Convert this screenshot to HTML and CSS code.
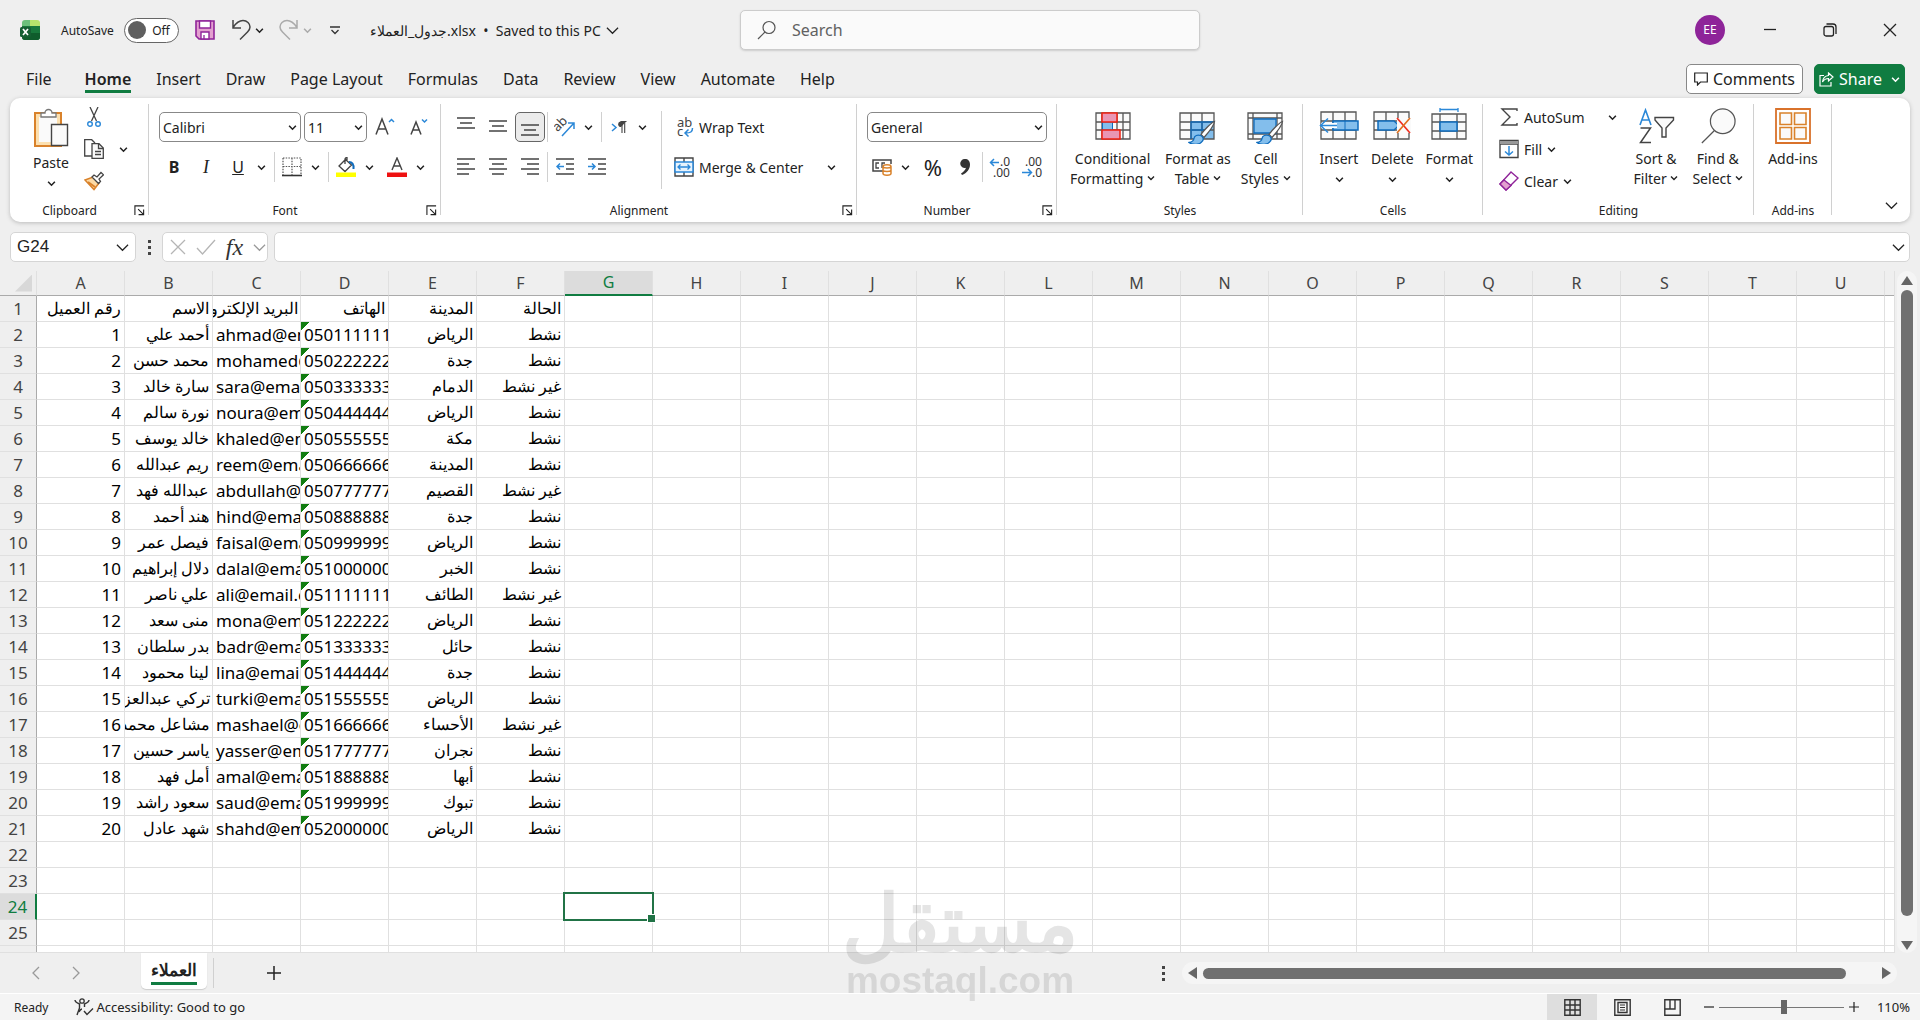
FILE: index.html
```html
<!DOCTYPE html>
<html lang="en">
<head>
<meta charset="UTF-8">
  <meta name="viewport" content="width=device-width, initial-scale=1.0">
  <title>جدول_العملاء.xlsx - Excel</title>
  <link rel="stylesheet" href="styles.css">
</head>
<body>

  <!-- shared icons -->
  <svg class="defs" width="0" height="0" aria-hidden="true">
    <symbol id="chev" viewBox="0 0 8 8"><path d="M1 2.5l3 3 3-3" fill="none" stroke="currentColor" stroke-width="1.4"/></symbol>
    <symbol id="chev-big" viewBox="0 0 14 14"><path d="M1 4l6 6 6-6" fill="none" stroke="currentColor" stroke-width="1.3"/></symbol>
    <symbol id="launch" viewBox="0 0 12 12"><path d="M1 11V1h10M4.500 4.500L10 10M10.500 5v5.500H5" fill="none" stroke="currentColor" stroke-width="1.2"/></symbol>
    <symbol id="brush" viewBox="0 0 28 26"><path d="M26.500 1.500c-3 1-10 8-13.500 13l3 3C20 13 26 6 26.500 1.500z" fill="#fff" stroke="#555" stroke-width="1.3"/><path d="M12.500 15.500c-3-1-6 0-6.500 3-.4 2.500-2 3.500-5 4 4 3 11 2.500 13.500-1.500 1.500-2 .5-4.500-2-5.500z" fill="#83beec" stroke="#0f6cbd" stroke-width="1.3"/></symbol>
  </svg>

  <header class="titlebar">
    <div class="title-left">
      <svg class="logo" width="20" height="20" viewBox="0 0 20 20"><path d="M5 0h6v7H2V3a3 3 0 0 1 3-3z" fill="#6cc07c"/><path d="M10 0h7a3 3 0 0 1 3 3v4H10z" fill="#b6e36c"/><path d="M2 6h18v11a3 3 0 0 1-3 3H5a3 3 0 0 1-3-3z" fill="#18783c"/><path d="M2 13h18v4a3 3 0 0 1-3 3H5a3 3 0 0 1-3-3z" fill="#0f5c2c"/><rect y="7" width="11" height="10" rx="1.500" fill="#155f33"/><path d="M3 9l5 6M8 9l-5 6" stroke="#fff" stroke-width="1.700"/></svg>
      <label class="autosave">AutoSave
        <span class="toggle"><input type="checkbox"><i></i>Off</span>
      </label>
      <button class="save" title="Save"><svg width="20" height="20" viewBox="0 0 20 20"><path d="M1 1h18v18H4l-3-3z" fill="#e3a0cf" stroke="#8f2399" stroke-width="1.600"/><path d="M4.500 1h11v7h-11zM6 12h8v7H6z" fill="#fff" stroke="#8f2399" stroke-width="1.400"/><path d="M9 19v-4" stroke="#8f2399" stroke-width="1.300"/></svg></button>
      <button class="undo" title="Undo"><svg width="20" height="22" viewBox="0 0 20 22"><path d="M2 1v8h8M2 8.500C5 4 8 1.500 12 1.500c4 0 7 3 7 6.500 0 2-1 3.500-2.500 5L9 20.500" fill="none" stroke="#444" stroke-width="1.500"/></svg></button>
      <button class="mini" title="Undo list"><svg width="9" height="9"><use href="#chev"/></svg></button>
      <button class="redo" title="Redo"><svg width="20" height="22" viewBox="0 0 20 22"><path d="M18 1v8h-8M18 8.500C15 4 12 1.500 8 1.500c-4 0-7 3-7 6.500 0 2 1 3.500 2.500 5l7.500 7.500" fill="none" stroke="#aaa" stroke-width="1.500"/></svg></button>
      <button class="mini dim" title="Redo list"><svg width="9" height="9"><use href="#chev"/></svg></button>
      <button class="qat" title="Customize"><svg width="10" height="9" viewBox="0 0 10 9"><path d="M0 1h10M1.500 4L5 7.500 8.500 4" fill="none" stroke="#333" stroke-width="1.300"/></svg></button>
      <button class="filename">جدول_العملاء.xlsx&nbsp; • &nbsp;Saved to this PC <svg width="13" height="13"><use href="#chev-big"/></svg></button>
    </div>
    <label class="search">
      <svg width="20" height="20" viewBox="0 0 20 20"><circle cx="12" cy="7.500" r="6" fill="none" stroke="#555" stroke-width="1.200"/><path d="M8 12l-7 7" stroke="#555" stroke-width="1.200"/></svg>
      <input type="text" placeholder="Search">
    </label>
    <div class="title-right">
      <button class="win"><span class="avatar">EE</span></button>
      <button class="win" title="Minimize"><svg width="14" height="14" viewBox="0 0 14 14"><path d="M1 6.500h12" stroke="#222" stroke-width="1.300"/></svg></button>
      <button class="win" title="Restore"><svg width="14" height="14" viewBox="0 0 14 14"><rect x="1" y="3.500" width="9.500" height="9.500" rx="2" fill="none" stroke="#222" stroke-width="1.300"/><path d="M3.500 1h6.500a3 3 0 0 1 3 3v7" fill="none" stroke="#222" stroke-width="1.300"/></svg></button>
      <button class="win" title="Close"><svg width="14" height="14" viewBox="0 0 14 14"><path d="M1 1l12 12M13 1L1 13" stroke="#222" stroke-width="1.300"/></svg></button>
    </div>
  </header>

  <nav class="tabs">
    <button class="tab file">File</button>
    <button class="tab active">Home</button>
    <button class="tab">Insert</button>
    <button class="tab">Draw</button>
    <button class="tab">Page Layout</button>
    <button class="tab">Formulas</button>
    <button class="tab">Data</button>
    <button class="tab">Review</button>
    <button class="tab">View</button>
    <button class="tab">Automate</button>
    <button class="tab">Help</button>
    <div class="spacer"></div>
    <button class="comments"><svg width="14" height="14" viewBox="0 0 14 14"><path d="M.7 1h12.600v9H6.500L3.500 13v-3H.7z" fill="none" stroke="#222" stroke-width="1.200"/></svg>Comments</button>
    <button class="share"><svg width="15" height="15" viewBox="0 0 15 15"><path d="M5 3.500H1v10.500h11v-4M9.500 1l4.500 4-4.500 4V6.500C7 6.500 5 7.500 3.500 10 4 6 6.500 3.800 9.500 3.500z" fill="none" stroke="#fff" stroke-width="1.200"/></svg>Share<svg class="tail" width="9" height="9"><use href="#chev"/></svg></button>
  </nav>

  <section class="ribbon">
    <div class="group clipboard">
      <div class="body">
        <button class="big paste"><svg width="36" height="40" viewBox="0 0 36 40"><path d="M2 5h26v33H2z" fill="#fce0b0" stroke="#d9822b" stroke-width="2"/><path d="M6 9h18v25H6z" fill="#fafafa"/><path d="M8 9V5h4a3.500 3.500 0 0 1 7 0h4v4z" fill="#fff" stroke="#777" stroke-width="1.300"/><path d="M18.500 16.500h16v21h-16z" fill="#fafafa" stroke="#444" stroke-width="1.400"/></svg><span>Paste</span><svg width="9" height="9"><use href="#chev"/></svg></button>
        <div class="col3">
          <button class="ic" title="Cut"><svg width="14" height="20" viewBox="0 0 14 20"><path d="M3 0l6.500 14M11 0L4.500 14" stroke="#444" stroke-width="1.300"/><circle cx="3" cy="17" r="2.300" fill="none" stroke="#2b88d8" stroke-width="1.400"/><circle cx="11" cy="17" r="2.300" fill="none" stroke="#2b88d8" stroke-width="1.400"/></svg></button>
          <div class="line"><button class="ic" title="Copy"><svg width="20" height="20" viewBox="0 0 20 20"><path d="M8 17H.7V.7h7L11 4" fill="none" stroke="#444" stroke-width="1.300"/><path d="M8 4.700h7L19.300 9v10.300H8z" fill="#fafafa" stroke="#444" stroke-width="1.300"/><path d="M14.500 5v4.500H19M11 12.500h6M11 15.500h6" fill="none" stroke="#444" stroke-width="1.300"/></svg></button><button class="mini copies" title="Copy options"><svg width="9" height="9"><use href="#chev"/></svg></button></div>
          <button class="ic" title="Format Painter"><svg width="20" height="20" viewBox="0 0 20 20"><path d="M1 9l8-3 6 6-5 6.500z" fill="#fcd9a4" stroke="#d9822b" stroke-width="1.500"/><path d="M4 11l7 5" stroke="#d9822b" stroke-width="2"/><path d="M8 6l2-2 3 2 4-4.500 2.500 2.300L15 8l1.500 2.500-2 2z" fill="#fff" stroke="#444" stroke-width="1.300"/></svg></button>
        </div>
      </div>
      <div class="caption more"><span>Clipboard</span><button title="Clipboard settings"><svg width="11" height="11"><use href="#launch"/></svg></button></div>
    </div>

    <div class="group font">
      <div class="body rows">
        <div class="line first">
          <span class="pick family"><select aria-label="Font"><option>Calibri</option></select><svg width="9" height="9"><use href="#chev"/></svg></span>
          <span class="pick size"><select aria-label="Font size"><option>11</option></select><svg width="9" height="9"><use href="#chev"/></svg></span>
          <button class="ic" title="Increase Font Size"><svg width="20" height="20" viewBox="0 0 20 20"><path d="M1 17.500L7 2l6 15.500M3 12h8" fill="none" stroke="#444" stroke-width="1.500"/><path d="M14 5l2.500-2.500L19 5" fill="none" stroke="#2b88d8" stroke-width="1.500"/></svg></button>
          <button class="ic" title="Decrease Font Size"><svg width="20" height="20" viewBox="0 0 20 20"><path d="M3 17.500L8 5l5 12.500M5 13h6" fill="none" stroke="#444" stroke-width="1.500"/><path d="M14 2.500L16.500 5 19 2.500" fill="none" stroke="#2b88d8" stroke-width="1.500"/></svg></button>
        </div>
        <div class="line">
          <button class="ic b">B</button>
          <button class="ic i">I</button>
          <button class="ic u">U</button>
          <button class="mini" title="Underline style"><svg width="9" height="9"><use href="#chev"/></svg></button>
          <span class="sep"></span>
          <button class="ic" title="Borders"><svg width="20" height="20" viewBox="0 0 20 20"><path d="M1 1h18v17M1 1v17M10 1v17M1 9.500h18" fill="none" stroke="#555" stroke-width="1.200" stroke-dasharray="1.500 1.200"/><path d="M0 18.500h20" stroke="#333" stroke-width="1.600"/></svg></button>
          <button class="mini" title="Border styles"><svg width="9" height="9"><use href="#chev"/></svg></button>
          <span class="sep"></span>
          <button class="ic" title="Fill Color"><svg width="20" height="20" viewBox="0 0 20 20"><path d="M3 9l6.500-6.500 6 5.500-6.500 6.500zM9 7V2a2 2 0 0 1 2-1.500V4" fill="none" stroke="#444" stroke-width="1.300"/><path d="M13 5c3 0 5 2 4.500 7" fill="none" stroke="#0f6cbd" stroke-width="2"/><path d="M0 15.500h20V20H0z" fill="#ff0"/></svg></button>
          <button class="mini" title="Fill colors"><svg width="9" height="9"><use href="#chev"/></svg></button>
          <button class="ic color" title="Font Color"><svg width="20" height="20" viewBox="0 0 20 20"><path d="M5 13L10 1l5 12M6.500 9h7" fill="none" stroke="#444" stroke-width="1.400"/><path d="M0 15.500h20V20H0z" fill="#e11"/></svg></button>
          <button class="mini" title="Font colors"><svg width="9" height="9"><use href="#chev"/></svg></button>
        </div>
      </div>
      <div class="caption more"><span>Font</span><button title="Font settings"><svg width="11" height="11"><use href="#launch"/></svg></button></div>
    </div>

    <div class="group alignment">
      <div class="body">
        <div class="rows">
          <div class="line">
            <button class="ic" title="Top Align"><svg width="18" height="20" viewBox="0 0 18 20"><path d="M0 1h18M3 6h12M0 11h18" stroke="#444" stroke-width="1.400"/></svg></button>
            <button class="ic" title="Middle Align"><svg width="18" height="20" viewBox="0 0 18 20"><path d="M0 4h18M3 9h12M0 14h18" stroke="#444" stroke-width="1.400"/></svg></button>
            <button class="ic on" title="Bottom Align"><svg width="18" height="20" viewBox="0 0 18 20"><path d="M0 8h18M3 13h12M0 18h18" stroke="#444" stroke-width="1.400"/></svg></button>
            <span class="sep tight"></span>
            <button class="ic" title="Orientation"><svg width="22" height="22" viewBox="0 0 22 22"><text x="0" y="12" transform="rotate(-45 7 10)" font-size="13" fill="#444">ab</text><path d="M8 20L20 7M14 7h6v6" fill="none" stroke="#2b88d8" stroke-width="1.500"/></svg></button>
            <button class="mini" title="Orientation options"><svg width="9" height="9"><use href="#chev"/></svg></button>
            <span class="sep"></span>
            <button class="ic" title="Text direction"><svg width="16" height="14" viewBox="0 0 16 14"><path d="M1 4l4 3.500L1 11" fill="none" stroke="#2b88d8" stroke-width="1.500"/><path d="M15 1.500h-5a2.800 2.800 0 0 0 0 5.600z" fill="#444"/><path d="M15.500 1.500H9.500M11 2v11M13.700 2v11" stroke="#444" stroke-width="1.100"/></svg></button>
            <button class="mini" title="Direction options"><svg width="9" height="9"><use href="#chev"/></svg></button>
          </div>
          <div class="line">
            <button class="ic" title="Align Left"><svg width="18" height="18" viewBox="0 0 18 18"><path d="M0 1h18M0 6h12M0 11h18M0 16h12" stroke="#444" stroke-width="1.400"/></svg></button>
            <button class="ic" title="Center"><svg width="18" height="18" viewBox="0 0 18 18"><path d="M0 1h18M3 6h12M0 11h18M3 16h12" stroke="#444" stroke-width="1.400"/></svg></button>
            <button class="ic" title="Align Right"><svg width="18" height="18" viewBox="0 0 18 18"><path d="M0 1h18M6 6h12M0 11h18M6 16h12" stroke="#444" stroke-width="1.400"/></svg></button>
            <span class="sep tight"></span>
            <button class="ic" title="Decrease Indent"><svg width="18" height="18" viewBox="0 0 18 18"><path d="M0 1h18M10 6h8M10 11h8M0 16h18" stroke="#444" stroke-width="1.400"/><path d="M8 8.500H1M4 5.500l-3 3 3 3" fill="none" stroke="#2b88d8" stroke-width="1.500"/></svg></button>
            <button class="ic" title="Increase Indent"><svg width="18" height="18" viewBox="0 0 18 18"><path d="M0 1h18M10 6h8M10 11h8M0 16h18" stroke="#444" stroke-width="1.400"/><path d="M0 8.500h7M4 5.500l3 3-3 3" fill="none" stroke="#2b88d8" stroke-width="1.500"/></svg></button>
          </div>
        </div>
        <span class="sep tall"></span>
        <div class="rows">
          <button class="wide"><svg width="20" height="20" viewBox="0 0 20 20"><text x="3" y="10" font-size="13" fill="#444">ab</text><text x="3" y="19" font-size="13" fill="#444">c</text><path d="M18.500 11c0 4-2 5-7 5M14.500 12.500L11 16l3.500 3.500" fill="none" stroke="#2b88d8" stroke-width="1.500"/></svg>Wrap Text</button>
          <div class="line"><button class="wide"><svg width="20" height="20" viewBox="0 0 20 20"><path d="M1 1h18v18H1zM10 1v4M10 15v4" fill="none" stroke="#444" stroke-width="1.400"/><path d="M1 5h18v10H1z" fill="#e8f3fc" stroke="#2b88d8" stroke-width="1.500"/><path d="M4 10h12M6.500 7.500L4 10l2.500 2.500M13.500 7.500L16 10l-2.500 2.500" fill="none" stroke="#2b88d8" stroke-width="1.300"/></svg>Merge &amp; Center</button><button class="mini merge" title="Merge options"><svg width="9" height="9"><use href="#chev"/></svg></button></div>
        </div>
      </div>
      <div class="caption more"><span>Alignment</span><button title="Alignment settings"><svg width="11" height="11"><use href="#launch"/></svg></button></div>
    </div>

    <div class="group number">
      <div class="body rows">
        <span class="pick format"><select aria-label="Number format"><option>General</option></select><svg width="9" height="9"><use href="#chev"/></svg></span>
        <div class="line">
          <button class="ic" title="Accounting"><svg width="20" height="18" viewBox="0 0 20 18"><path d="M11 13H1V2h18v4" fill="none" stroke="#444" stroke-width="1.500"/><path d="M7 5H4v5h3M13 5h-3v5" fill="none" stroke="#444" stroke-width="1.300"/><path d="M11 8.500v7c0 2.300 8 2.300 8 0v-7c0-2.300-8-2.300-8 0zm0 0c0 2 8 2 8 0m-8 3.500c0 2 8 2 8 0" fill="#fff" stroke="#d9822b" stroke-width="1.500"/></svg></button>
          <button class="mini" title="Currencies"><svg width="9" height="9"><use href="#chev"/></svg></button>
          <button class="ic percent">%</button>
          <button class="ic" title="Comma Style"><svg width="12" height="18" viewBox="0 0 12 18"><path d="M6 1a4.500 4.500 0 1 0 1 8.800C6.500 12 4.500 14 2 15.500l1 1.500C8 15 11 11 11 6.500 11 3 9 1 6 1z" fill="#333"/></svg></button>
          <span class="sep tight"></span>
          <button class="ic" title="Increase Decimal"><svg width="22" height="22" viewBox="0 0 22 22"><text x="11" y="10" font-size="12" fill="#333">.0</text><text x="4" y="21" font-size="12" fill="#333">.00</text><path d="M10 6.500H2M5 3L1.500 6.500 5 10" fill="none" stroke="#2b88d8" stroke-width="1.500"/></svg></button>
          <button class="ic" title="Decrease Decimal"><svg width="22" height="22" viewBox="0 0 22 22"><text x="4" y="10" font-size="12" fill="#333">.00</text><text x="11" y="21" font-size="12" fill="#333">.0</text><path d="M1 16.500h9M7 13l3.500 3.500L7 20" fill="none" stroke="#2b88d8" stroke-width="1.500"/></svg></button>
        </div>
      </div>
      <div class="caption more"><span>Number</span><button title="Number settings"><svg width="11" height="11"><use href="#launch"/></svg></button></div>
    </div>

    <div class="group styles">
      <div class="body">
        <button class="big"><svg width="36" height="36" viewBox="0 0 36 36"><path d="M1 5h34v26H1zM1 14h34M1 22h34M7 5v26M22 5v26M28 5v26" fill="#fafafa" stroke="#555" stroke-width="1.300"/><path d="M7.500 14h10v8h-10z" fill="#83beec" stroke="#0f6cbd"/><path d="M7 5h15v9H7zM7 22h18v9H7z" fill="#e996b4" stroke="#f02010" stroke-width="1.500"/></svg><span>Conditional</span><span>Formatting <svg width="8" height="8"><use href="#chev"/></svg></span></button>
        <button class="big"><svg width="38" height="36" viewBox="0 0 38 36"><path d="M1 5h34v26H1z" fill="#fafafa"/><path d="M12 14h23v17H12z" fill="#83beec"/><path d="M1 5h34v26H1zM1 14h34M1 22h34M12 5v26M23 5v26" fill="none" stroke="#555" stroke-width="1.300"/><path d="M12 31V14h23M12 22h20M23 14v9" fill="none" stroke="#0f6cbd" stroke-width="1.300"/><use href="#brush" x="9" y="12" width="28" height="26"/></svg><span>Format as</span><span>Table <svg width="8" height="8"><use href="#chev"/></svg></span></button>
        <button class="big"><svg width="38" height="36" viewBox="0 0 38 36"><path d="M1 5h34v26H1zM1 10h34M1 26h34M6 5v26M30 5v26" fill="#fafafa" stroke="#555" stroke-width="1.300"/><path d="M7 11h22v14H7z" fill="#83beec" stroke="#0f6cbd" stroke-width="1.300"/><use href="#brush" x="9" y="12" width="28" height="26"/></svg><span>Cell</span><span>Styles <svg width="8" height="8"><use href="#chev"/></svg></span></button>
      </div>
      <div class="caption"><span>Styles</span></div>
    </div>

    <div class="group cells">
      <div class="body">
        <button class="big"><svg width="40" height="36" viewBox="0 0 40 36"><path d="M2 4h35v27H2zM2 13h35M2 22h35M14 4v27M26 4v27" fill="#fafafa" stroke="#555" stroke-width="1.300"/><path d="M14 13h25v9H14z" fill="#83beec" stroke="#0f6cbd" stroke-width="1.500"/><path d="M26 13v9" stroke="#0f6cbd"/><path d="M18 17.500H2" stroke="#fff" stroke-width="5"/><path d="M18 17.500H2M9 10.500l-7.500 7 7.500 7" fill="none" stroke="#2b88d8" stroke-width="1.500"/></svg><span>Insert</span><svg width="9" height="9"><use href="#chev"/></svg></button>
        <button class="big"><svg width="38" height="36" viewBox="0 0 38 36"><path d="M1 4h35v27H1zM1 13h35M1 22h35M13 4v27M25 4v27" fill="#fafafa" stroke="#555" stroke-width="1.300"/><path d="M5 13h16l5 4.500-5 4.500H5z" fill="#83beec" stroke="#0f6cbd" stroke-width="1.500"/><path d="M24 10h14v15H24z" fill="#fafafa"/><path d="M24 10l13 15" stroke="#f03020" stroke-width="1.700"/><path d="M37 10L24 25" stroke="#e07020" stroke-width="1.700"/></svg><span>Delete</span><svg width="9" height="9"><use href="#chev"/></svg></button>
        <button class="big"><svg width="38" height="36" viewBox="0 0 38 36"><path d="M2 6h34v25H2zM2 14h34M2 23h34M10 6v25M27 6v25" fill="#fafafa" stroke="#555" stroke-width="1.300"/><path d="M10 14h17v9H10z" fill="#83beec" stroke="#0f6cbd" stroke-width="1.500"/><path d="M10 1.500h18M10 0v4M28 0v4" stroke="#2b88d8" stroke-width="1.300"/></svg><span>Format</span><svg width="9" height="9"><use href="#chev"/></svg></button>
      </div>
      <div class="caption"><span>Cells</span></div>
    </div>

    <div class="group editing">
      <div class="body">
        <div class="col3">
          <div class="line"><button class="wide"><svg width="20" height="20" viewBox="0 0 20 20"><path d="M18 4V2H3l8 8-8 8h15v-2" fill="none" stroke="#444" stroke-width="1.400"/></svg>AutoSum</button><button class="mini sum" title="Functions"><svg width="9" height="9"><use href="#chev"/></svg></button></div>
          <button class="wide"><svg width="20" height="20" viewBox="0 0 20 20"><path d="M1 1.500h18v17H1zM1 5h18" fill="none" stroke="#444" stroke-width="1.400"/><path d="M1 2h18v3H1z" fill="#999"/><path d="M10 7v9M6 12.500l4 3.500 4-3.500" fill="none" stroke="#2b88d8" stroke-width="1.500"/></svg>Fill <svg width="9" height="9"><use href="#chev"/></svg></button>
          <button class="wide"><svg width="20" height="20" viewBox="0 0 20 20"><path d="M12 1l7 6-12 12-6-6z" fill="#fff" stroke="#8f2399" stroke-width="1.400"/><path d="M5 9l7 5.500L7 19l-6-6z" fill="#e3a0cf" stroke="#8f2399" stroke-width="1.400"/></svg>Clear <svg width="9" height="9"><use href="#chev"/></svg></button>
        </div>
        <button class="big"><svg width="38" height="36" viewBox="0 0 38 36"><path d="M3 17L8.500 2 14 17M5 12h7" fill="none" stroke="#2b88d8" stroke-width="1.600"/><path d="M3.500 20h10L3.500 34.500h10.500" fill="none" stroke="#444" stroke-width="1.500"/><path d="M18 9.500h18.500v2.500l-7.500 8v9h-4v-9l-7-8z" fill="#fafafa" stroke="#444" stroke-width="1.400"/></svg><span>Sort &amp;</span><span>Filter <svg width="8" height="8"><use href="#chev"/></svg></span></button>
        <button class="big"><svg width="38" height="38" viewBox="0 0 38 38"><circle cx="24" cy="14" r="13" fill="#fafafa" stroke="#555" stroke-width="1.300"/><path d="M15 24L2 37" stroke="#555" stroke-width="1.300"/></svg><span>Find &amp;</span><span>Select <svg width="8" height="8"><use href="#chev"/></svg></span></button>
      </div>
      <div class="caption"><span>Editing</span></div>
    </div>

    <div class="group addins">
      <div class="body">
        <button class="big"><svg width="36" height="36" viewBox="0 0 36 36"><path d="M1 1h34v34H1z" fill="#fff" stroke="#d9722b" stroke-width="1.800"/><path d="M5 5h11.500v11.500H5zM19.500 5H31v11.500H19.500zM5 19.500h11.500V31H5zM19.500 19.500H31V31H19.500z" fill="#fafafa" stroke="#d9822b" stroke-width="1.600"/></svg><span>Add-ins</span></button>
      </div>
      <div class="caption"><span>Add-ins</span></div>
    </div>
    <button class="collapse" title="Collapse ribbon"><svg width="13" height="13"><use href="#chev-big"/></svg></button>
  </section>

  <section class="formula">
    <div class="box namebox"><input type="text" aria-label="Name Box" value="G24"><svg width="13" height="13"><use href="#chev-big"/></svg></div>
    <span class="dots"></span>
    <div class="box fxbox">
      <button title="Cancel"><svg width="16" height="16" viewBox="0 0 16 16"><path d="M1 1l14 14M15 1L1 15" stroke="#b5b5b5" stroke-width="1.300"/></svg></button>
      <button title="Enter"><svg width="20" height="16" viewBox="0 0 20 16"><path d="M1 9l5.500 6L19 1" fill="none" stroke="#b5b5b5" stroke-width="1.300"/></svg></button>
      <button class="fx">fx</button>
      <svg width="13" height="13"><use href="#chev-big"/></svg>
    </div>
    <div class="box inputbox"><input type="text" aria-label="Formula Bar"><svg width="13" height="13"><use href="#chev-big"/></svg></div>
  </section>

  <main class="sheet">
    <div class="grid-wrap">
      <table id="grid"></table>
    </div>
    <div class="vscroll"><i class="up"></i><i class="thumb"></i><i class="down"></i></div>
  </main>

  <footer class="sheetbar">
    <button class="nav" title="Previous sheet"><svg width="8" height="14" viewBox="0 0 8 14"><path d="M7 1L1 7l6 6" fill="none" stroke="#999" stroke-width="1.300"/></svg></button>
    <button class="nav" title="Next sheet"><svg width="8" height="14" viewBox="0 0 8 14"><path d="M1 1l6 6-6 6" fill="none" stroke="#999" stroke-width="1.300"/></svg></button>
    <button class="sheet-tab"><span>العملاء</span></button>
    <span class="sep"></span>
    <button class="plus" title="New sheet"><svg width="14" height="14" viewBox="0 0 14 14"><path d="M7 0v14M0 7h14" stroke="#222" stroke-width="1.500"/></svg></button>
    <div class="spacer"></div>
    <span class="dots"></span>
    <div class="hscroll"><i class="left"></i><i class="thumb"></i><i class="right"></i></div>
  </footer>

  <div class="status">
    <span class="ready">Ready</span>
    <button class="access"><svg width="20" height="18" viewBox="0 0 20 18"><circle cx="8" cy="3" r="2.200" fill="none" stroke="#333" stroke-width="1.300"/><path d="M1 2c0 2 2 3 4.500 4v4L3 17M15 2c0 2-2 3-4.500 4v3M5 14c1-2 2-3 3-3" fill="none" stroke="#333" stroke-width="1.400"/><path d="M10 13l3 3.500 6-6" fill="none" stroke="#333" stroke-width="1.400"/></svg>Accessibility: Good to go</button>
    <div class="spacer"></div>
    <button class="view on" title="Normal"><svg width="17" height="17" viewBox="0 0 17 17"><path d="M.8.8h15.400v15.400H.8zM.8 6h15.400M.8 11h15.400M6 .8v15.400M11 .8v15.400" fill="none" stroke="#333" stroke-width="1.400"/></svg></button>
    <button class="view" title="Page Layout"><svg width="17" height="17" viewBox="0 0 17 17"><path d="M.8.8h15.400v15.400H.8zM4 3.500h9v10H4z" fill="none" stroke="#333" stroke-width="1.400"/><path d="M6 6h5M6 8.500h5M6 11h5" stroke="#333"/></svg></button>
    <button class="view" title="Page Break Preview"><svg width="17" height="17" viewBox="0 0 17 17"><path d="M.8.8h15.400v15.400H.8zM.8 10H11V.8M6 .8V10" fill="none" stroke="#333" stroke-width="1.400"/></svg></button>
    <button class="zoom-btn" title="Zoom Out"><svg width="10" height="10" viewBox="0 0 10 10"><path d="M0 5h10" stroke="#222" stroke-width="1.200"/></svg></button>
    <input type="range" aria-label="Zoom" min="0" max="200" value="104">
    <button class="zoom-btn" title="Zoom In"><svg width="10" height="10" viewBox="0 0 10 10"><path d="M0 5h10M5 0v10" stroke="#222" stroke-width="1.200"/></svg></button>
    <span class="percent">110%</span>
  </div>

  <div class="watermark"><b lang="ar">مستقل</b><span>mostaql.com</span></div>

  <script src="script.js"></script>
</body>
</html>
```
FILE: styles.css
```css
* {
  box-sizing: border-box;
}
body {
  margin: 0;
  height: 100vh;
  display: flex;
  flex-direction: column;
  overflow: hidden;
  background: #efefef;
  color: #222;
  font-family: "Noto Sans", "Open Sans", sans-serif;
  font-size: 14px;
}
button, input, select {
  font: inherit;
  color: inherit;
  background: none;
  border: 0;
  padding: 0;
  margin: 0;
  outline: 0;
}
button {
  display: flex;
  align-items: center;
  justify-content: center;
  white-space: nowrap;
}
svg {
  display: block;
  flex: none;
}
.defs {
  position: absolute;
}
.spacer {
  flex: 1;
}

/* title bar */
.titlebar {
  height: 60px;
  flex: none;
  display: grid;
  grid-template-columns: 1fr 460px 1fr;
  align-items: center;
  padding-left: 20px;
}
.title-left {
  display: flex;
  align-items: center;
}
.autosave {
  display: flex;
  align-items: center;
  gap: 10px;
  margin-left: 21px;
  font-size: 12px;
}
.toggle {
  width: 55px;
  height: 25px;
  padding: 0 8px 0 3px;
  display: flex;
  align-items: center;
  justify-content: space-between;
  border: 1px solid #666;
  border-radius: 13px;
  background: #fff;
}
.toggle input {
  position: absolute;
  opacity: 0;
}
.toggle i {
  width: 18px;
  height: 18px;
  border-radius: 50%;
  background: #5f5f5f;
}
.save {
  margin: 0 14px 0 16px;
}
.mini {
  width: 14px;
  height: 30px;
}
.undo, .redo {
  width: 24px;
}
.titlebar .mini {
  margin-right: 10px;
}
.dim {
  color: #aaa;
}
.qat {
  margin: 0 30px 0 5px;
}
.filename svg {
  margin-left: 5px;
}
.search {
  height: 40px;
  display: flex;
  align-items: center;
  gap: 15px;
  padding: 0 16px;
  border: 1px solid #ccc;
  border-radius: 5px;
  background: #fafafa;
  box-shadow: 0 1px 2px #ccc;
  font-size: 16px;
}
.search input {
  flex: 1;
}
.search input::placeholder {
  color: #616161;
}
.title-right {
  display: flex;
  justify-content: flex-end;
}
.win {
  width: 60px;
  height: 60px;
}
.avatar {
  width: 30px;
  height: 30px;
  line-height: 30px;
  border-radius: 50%;
  background: #8e2499;
  color: #fff;
  font-size: 12px;
}

/* ribbon tabs */
.tabs {
  height: 38px;
  flex: none;
  display: flex;
  align-items: center;
  gap: 25px;
  padding: 0 15px 0 26px;
  font-size: 16px;
}
.tab {
  height: 28px;
  border-bottom: 3px solid transparent;
  border-top: 3px solid transparent;
}
.tab.file {
  margin-right: 8px;
}
.tab.active {
  font-weight: 600;
  border-bottom-color: #107c41;
}
.comments, .share {
  height: 30px;
  gap: 5px;
  padding: 0 7px;
  border: 1px solid #888;
  border-radius: 5px;
  background: #fff;
}
.share {
  margin-left: -14px;
  padding: 0 4px;
  background: #107c41;
  border-color: #107c41;
  color: #fff;
}
.tail {
  margin-left: 4px;
}

/* ribbon */
.ribbon {
  height: 124px;
  flex: none;
  display: flex;
  margin: 0 10px;
  border-radius: 10px;
  background: #fff;
  box-shadow: 0 1px 4px #bbb;
  white-space: nowrap;
}
.group {
  position: relative;
  display: flex;
  flex-direction: column;
  padding: 4px 9px 2px;
  flex: none;
}
.group::after {
  content: "";
  position: absolute;
  right: 0;
  top: 6px;
  bottom: 7px;
  width: 1px;
  background: #d0d0d0;
}
.clipboard { width: 139px; }
.font { width: 292px; }
.alignment { width: 416px; }
.number { width: 200px; }
.styles { width: 246px; }
.cells { width: 180px; }
.editing { width: 271px; }
.addins { width: 78px; }
.body {
  flex: 1;
  display: flex;
}
.rows {
  display: flex;
  flex-direction: column;
  align-items: flex-start;
  gap: 10px;
  padding-top: 10px;
}
.line {
  display: flex;
  align-items: center;
}
.first {
  gap: 3px;
}
.first .ic {
  width: 30px;
}
.col3 {
  display: flex;
  flex-direction: column;
  align-items: flex-start;
  gap: 2px;
}
.caption {
  height: 20px;
  display: flex;
  align-items: center;
  justify-content: center;
  font-size: 12px;
}
.caption.more {
  padding-right: 20px;
}
.caption button {
  position: absolute;
  right: 4px;
}
.ic {
  width: 32px;
  height: 30px;
}
.ic.on {
  width: 30px;
  margin: 0 1px;
  border: 1px solid #666;
  border-radius: 5px;
  background: #ebebeb;
}
.b {
  font-weight: 700;
  font-size: 16px;
}
.i {
  font-style: italic;
  font-size: 18px;
  font-family: "Liberation Serif", serif;
}
.u {
  font-size: 16px;
  text-decoration: underline;
}
.color {
  margin-left: 5px;
}
.percent.ic {
  margin-left: 5px;
  font-size: 22px;
}
.sep {
  width: 1px;
  height: 30px;
  margin: 0 1px 0 6px;
  background: #d0d0d0;
}
.sep.tight {
  margin: 0 1px;
}
.sep.tall {
  height: 78px;
  margin: 9px 12px 0;
}
.pick {
  position: relative;
  height: 30px;
  border: 1px solid #888;
  border-radius: 5px;
}
.pick select {
  width: 100%;
  height: 100%;
  padding-left: 3px;
  appearance: none;
}
.pick svg {
  position: absolute;
  right: 3px;
  top: 10px;
}
.family { width: 142px; }
.size { width: 63px; }
.format { width: 180px; }
.family, .format {
  margin-left: 1px;
}
.wide {
  height: 30px;
  gap: 5px;
}
.merge {
  margin-left: 21px;
}
.sum {
  margin-left: 21px;
}
.big {
  height: 98px;
  flex-direction: column;
  justify-content: flex-start;
  padding-top: 6px;
}
.big > svg:first-child {
  height: 36px;
  margin-bottom: 5px;
}
.big > span {
  line-height: 20px;
}
.big > svg:last-child {
  margin-top: 6px;
}
.big span svg {
  display: inline-block;
  vertical-align: 2px;
}
.clipboard .body {
  gap: 9px;
  padding-left: 14px;
}
.copies {
  margin-left: 6px;
}
.paste > svg:first-child {
  height: 40px;
}
.styles .body {
  gap: 10px;
  padding-left: 4px;
}
.cells .body {
  gap: 12px;
  padding-left: 7px;
}
.editing .body {
  gap: 14px;
  padding-left: 7px;
}
.addins .body {
  justify-content: center;
}
.collapse {
  margin: auto 12px 10px auto;
}

/* formula bar */
.formula {
  flex: none;
  display: flex;
  align-items: center;
  margin: 10px 10px 9px;
}
.box {
  height: 30px;
  display: flex;
  align-items: center;
  border: 1px solid #d5d5d5;
  border-radius: 5px;
  background: #fff;
}
.namebox {
  width: 126px;
  padding: 0 6px;
  font-family: "Liberation Sans", sans-serif;
  font-size: 17px;
}
.box input {
  flex: 1;
  min-width: 0;
}
.dots {
  width: 3px;
  height: 15px;
  border-top: 3px solid #444;
  border-bottom: 3px solid #444;
  background: linear-gradient(#444, #444) center / 3px 3px no-repeat;
}
.formula .dots {
  margin: 0 11px 0 12px;
}
.fxbox {
  width: 106px;
  margin-right: 6px;
  padding: 0 1px 0 7px;
  justify-content: space-between;
  color: #999;
}
.fx {
  font: italic 24px "Liberation Serif", serif;
  color: #333;
}
.inputbox {
  flex: 1;
  padding: 0 4px 0 8px;
}

/* grid */
.sheet {
  flex: 1;
  min-height: 0;
  display: flex;
}
.grid-wrap {
  flex: 1;
  min-width: 0;
  overflow: hidden;
  border-right: 1px solid #e0e0e0;
  border-bottom: 1px solid #e0e0e0;
}
#grid {
  width: 1973px;
  table-layout: fixed;
  border-collapse: separate;
  border-spacing: 0;
  font-size: 17px;
  color: #000;
}
#grid th, #grid td {
  height: 26px;
  padding: 0;
  line-height: 25px;
  overflow: hidden;
  white-space: nowrap;
  border-right: 1px solid #e0e0e0;
  border-bottom: 1px solid #e0e0e0;
}
#grid th {
  background: #efefef;
  color: #444;
  font-weight: 400;
  text-align: center;
}
#grid thead th {
  height: 25px;
  line-height: 23px;
  font-size: 16px;
  border-bottom-color: #aaa;
}
#grid tbody th, #grid .corner {
  width: 37px;
  border-right-color: #aaa;
}
#grid .corner {
  padding-left: 15px;
  border-right-color: #e0e0e0;
}
.corner i {
  display: block;
  width: 17px;
  height: 17px;
  background: #d8d8d8;
  clip-path: polygon(100% 0, 100% 100%, 0 100%);
}
#grid td {
  background: #fff;
  padding: 0 3px;
}
#grid td.num {
  text-align: right;
}
#grid td.ar {
  direction: rtl;
  font-size: 16px;
}
#grid td.phone {
  background: linear-gradient(135deg, #107c10 6px, #fff 6px);
}
#grid thead th.sel {
  background: #dcdcdc;
  color: #107c41;
  border-bottom: 2px solid #107c41;
}
#grid tbody th.sel {
  background: #dcdcdc;
  color: #107c41;
  border-right: 2px solid #107c41;
}
#grid td.cursor {
  position: relative;
  overflow: visible;
}
.cursor::before {
  content: "";
  position: absolute;
  inset: -2px;
  border: 2px solid #217346;
}
.cursor::after {
  content: "";
  position: absolute;
  right: -4px;
  bottom: -4px;
  width: 7px;
  height: 7px;
  border: 1px solid #fff;
  background: #217346;
}
.vscroll {
  width: 20px;
  margin: 0 3px 0 2px;
  padding: 5px 0 3px;
  display: flex;
  flex-direction: column;
  align-items: center;
  gap: 5px;
  border-radius: 10px;
  background: #f5f5f5;
}
.vscroll .thumb {
  flex: 1;
  width: 12px;
  margin-bottom: 20px;
  border-radius: 6px;
  background: #707070;
}
.up, .down {
  border: 6px solid transparent;
}
.up {
  border-top: 0;
  border-bottom: 9px solid #666;
}
.down {
  border-bottom: 0;
  border-top: 9px solid #666;
}

/* sheet tabs */
.sheetbar {
  height: 40px;
  flex: none;
  display: flex;
  align-items: center;
  padding: 0 23px 0 16px;
}
.nav {
  width: 40px;
  height: 30px;
}
.sheet-tab {
  height: 36px;
  align-self: flex-start;
  margin-left: 45px;
  padding: 0 10px;
  border-radius: 0 0 5px 5px;
  background: #fff;
  box-shadow: 0 1px 1px #ccc;
  font-weight: 700;
  font-size: 17px;
}
.sheet-tab span {
  height: 28px;
  line-height: 25px;
  border-bottom: 3px solid #107c41;
}
.sheetbar .sep {
  margin: 0 53px 0 6px;
}
.hscroll {
  width: 38%;
  height: 22px;
  margin-left: 17px;
  padding: 0 6px;
  display: flex;
  align-items: center;
  gap: 6px;
  border-radius: 11px;
  background: #f5f5f5;
}
.hscroll .thumb {
  flex: 1;
  height: 11px;
  margin-right: 30px;
  border-radius: 6px;
  background: #707070;
}
.left, .right {
  border: 6px solid transparent;
}
.left {
  border-left: 0;
  border-right: 9px solid #666;
}
.right {
  border-right: 0;
  border-left: 9px solid #666;
}

/* status bar */
.status {
  height: 27px;
  flex: none;
  display: flex;
  align-items: center;
  padding: 0 10px 0 14px;
  border-top: 1px solid #fff;
  background: #f4f4f4;
  font-size: 12px;
}
.access {
  margin-left: 26px;
  gap: 2px;
  font-size: 13px;
}
.view {
  width: 50px;
  height: 26px;
}
.view.on {
  background: #dedede;
}
.zoom-btn {
  width: 20px;
}
.view + .zoom-btn {
  margin-left: 2px;
}
.status input {
  width: 125px;
  height: 16px;
  appearance: none;
  background: linear-gradient(#777, #777) center / 100% 1px no-repeat;
}
.status input::-webkit-slider-thumb {
  appearance: none;
  width: 6px;
  height: 14px;
  background: #666;
}
.status .percent {
  width: 46px;
  text-align: right;
  font-size: 13px;
}

.watermark {
  position: fixed;
  left: 0;
  right: 0;
  bottom: 20px;
  display: flex;
  flex-direction: column;
  align-items: center;
  color: #000;
  opacity: .1;
  pointer-events: none;
}
.watermark b {
  font-size: 79px;
  line-height: 82px;
}
.watermark span {
  font: 700 37px/38px "Liberation Sans", sans-serif;
}
```
FILE: script.js
```js
var head = ['رقم العميل', 'الاسم', 'البريد الإلكتروني', 'الهاتف', 'المدينة', 'الحالة'];
var active = 'نشط';
var inactive = 'غير نشط';
var rows = [
  ['أحمد علي', 'ahmad', '0501111111', 'الرياض', active],
  ['محمد حسن', 'mohamed', '0502222222', 'جدة', active],
  ['سارة خالد', 'sara', '0503333333', 'الدمام', inactive],
  ['نورة سالم', 'noura', '0504444444', 'الرياض', active],
  ['خالد يوسف', 'khaled', '0505555555', 'مكة', active],
  ['ريم عبدالله', 'reem', '0506666666', 'المدينة', active],
  ['عبدالله فهد', 'abdullah', '0507777777', 'القصيم', inactive],
  ['هند أحمد', 'hind', '0508888888', 'جدة', active],
  ['فيصل عمر', 'faisal', '0509999999', 'الرياض', active],
  ['دلال إبراهيم', 'dalal', '0510000000', 'الخبر', active],
  ['علي ناصر', 'ali', '0511111111', 'الطائف', inactive],
  ['منى سعد', 'mona', '0512222222', 'الرياض', active],
  ['بدر سلطان', 'badr', '0513333333', 'حائل', active],
  ['لينا محمود', 'lina', '0514444444', 'جدة', active],
  ['تركي عبدالعزيز', 'turki', '0515555555', 'الرياض', active],
  ['مشاعل محمد', 'mashael', '0516666666', 'الأحساء', inactive],
  ['ياسر حسين', 'yasser', '0517777777', 'نجران', active],
  ['أمل فهد', 'amal', '0518888888', 'أبها', active],
  ['سعود راشد', 'saud', '0519999999', 'تبوك', active],
  ['شهد عادل', 'shahd', '0520000000', 'الرياض', active]
];
var letters = 'ABCDEFGHIJKLMNOPQRSTU'.split('');
letters.push('');

var html = '<thead><tr><th class="corner"><i></i></th>';
letters.forEach(function(l) {
  html += '<th' + (l === 'G' ? ' class="sel"' : '') + '>' + l + '</th>';
});
html += '</tr></thead><tbody>';

for (var r = 1; r <= 26; r++) {
  html += '<tr><th' + (r === 24 ? ' class="sel"' : '') + '>' + r + '</th>';
  for (var c = 0; c < letters.length; c++) {
    var text = '';
    var cls = '';
    if (r === 1 && c < 6) {
      text = head[c];
      cls = 'ar';
    } else if (r > 1 && r <= rows.length + 1 && c < 6) {
      var row = rows[r - 2];
      text = [r - 1, row[0], row[1] + '@email.com', row[2], row[3], row[4]][c];
      cls = ['num', 'ar', '', 'phone', 'ar', 'ar'][c];
    } else if (r === 24 && c === 6) {
      cls = 'cursor';
    }
    html += '<td' + (cls ? ' class="' + cls + '"' : '') + '>' + text + '</td>';
  }
  html += '</tr>';
}
document.getElementById('grid').innerHTML = html + '</tbody>';
```
